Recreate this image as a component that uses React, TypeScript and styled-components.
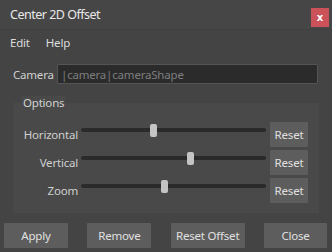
import React from "react";
import styled, { createGlobalStyle } from "styled-components";

const Global = createGlobalStyle`
  html, body { margin: 0; padding: 0; background: #444444; }
  * { box-sizing: border-box; }
`;

const Window = styled.div`
  width: 332px;
  height: 252px;
  background: #444444;
  display: flex;
  flex-direction: column;
  color: #cfcfcf;
  font-family: "Noto Sans", "Open Sans", sans-serif;
  font-size: 11.5px;
  letter-spacing: -0.2px;
  overflow: hidden;
`;

const TitleBar = styled.div`
  height: 30px;
  background: #464646;
  border-bottom: 1px solid #404040;
  display: flex;
  align-items: flex-start;
  justify-content: space-between;
  padding: 0 3px 0 10px;
`;

const Title = styled.div`
  font-size: 12.5px;
  letter-spacing: -0.5px;
  color: #e8e8e8;
  line-height: 30px;
`;

const CloseX = styled.div`
  margin-top: 8px;
  width: 18px;
  height: 19px;
  background: #cc5259;
  color: #ffffff;
  font-family: "DejaVu Sans", sans-serif;
  font-weight: bold;
  font-size: 10px;
  letter-spacing: 0;
  display: flex;
  align-items: center;
  justify-content: center;
  line-height: 1;
`;

const MenuBar = styled.div`
  height: 24px;
  display: flex;
  align-items: center;
  gap: 16px;
  padding-left: 10px;
  color: #dcdcdc;
`;

const MenuItem = styled.span``;

const CameraRow = styled.div`
  margin-top: 10px;
  height: 20px;
  display: flex;
  align-items: center;
  padding: 0 14px 0 13px;
`;

const FieldLabel = styled.span`
  width: 44px;
  color: #cfcfcf;
`;

const TextField = styled.div`
  flex: 1;
  height: 20px;
  background: #2b2b2b;
  border: 1px solid #555555;
  border-radius: 2px;
  color: #7d7d7d;
  padding-left: 3px;
  display: flex;
  align-items: center;
`;

const Group = styled.div`
  position: relative;
  margin: 19px 13px 0 13px;
  background: #494949;
  padding: 19px 11px 10px 0;
  display: flex;
  flex-direction: column;
  gap: 3px;
`;

const Legend = styled.span`
  position: absolute;
  top: -7px;
  left: 8px;
  padding: 0 2px;
  background: #494949;
  color: #d2d2d2;
  line-height: 14px;
`;

const SliderRow = styled.div`
  height: 25px;
  display: flex;
  align-items: center;
`;

const RowLabel = styled.span`
  width: 65px;
  margin-right: 3px;
  text-align: right;
  color: #cfcfcf;
`;

const Track = styled.div`
  position: relative;
  flex: 1;
  align-self: flex-start;
  margin-top: 6px;
  margin-right: 4px;
  height: 4px;
  border-radius: 2px;
  background: #2a2a2a;
`;

const Handle = styled.div`
  position: absolute;
  top: -4.5px;
  width: 7px;
  height: 13px;
  margin-left: -3.5px;
  border-radius: 2px;
  background: #c4c4c4;
`;

const Button = styled.div<{ $w: number }>`
  width: ${(p) => p.$w}px;
  height: 25px;
  background: #5d5d5d;
  border-radius: 1px;
  color: #e0e0e0;
  display: flex;
  align-items: center;
  justify-content: center;
`;

const Footer = styled.div`
  margin-top: 10px;
  display: flex;
  justify-content: space-between;
  padding: 0 5px 0 4px;
`;

const sliders = [
  { label: "Horizontal", value: 0.39 },
  { label: "Vertical", value: 0.59 },
  { label: "Zoom", value: 0.45 },
];

export default function App() {
  return (
    <>
      <Global />
      <Window>
        <TitleBar>
          <Title>Center 2D Offset</Title>
          <CloseX>x</CloseX>
        </TitleBar>
        <MenuBar>
          <MenuItem>Edit</MenuItem>
          <MenuItem>Help</MenuItem>
        </MenuBar>
        <CameraRow>
          <FieldLabel>Camera</FieldLabel>
          <TextField>|camera|cameraShape</TextField>
        </CameraRow>
        <Group>
          <Legend>Options</Legend>
          {sliders.map((s) => (
            <SliderRow key={s.label}>
              <RowLabel>{s.label}</RowLabel>
              <Track>
                <Handle style={{ left: `${s.value * 100}%` }} />
              </Track>
              <Button $w={38}>Reset</Button>
            </SliderRow>
          ))}
        </Group>
        <Footer>
          <Button $w={64}>Apply</Button>
          <Button $w={64}>Remove</Button>
          <Button $w={74}>Reset Offset</Button>
          <Button $w={63}>Close</Button>
        </Footer>
      </Window>
    </>
  );
}
